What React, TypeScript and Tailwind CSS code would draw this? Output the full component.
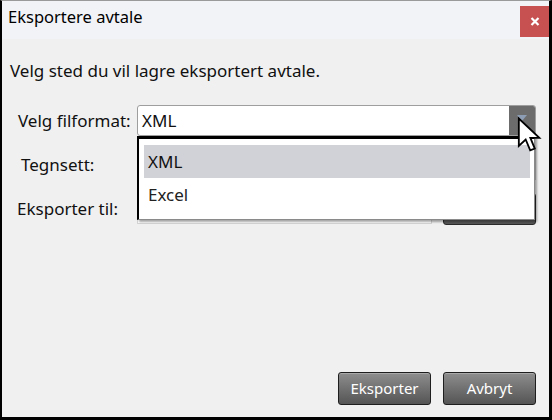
import React from "react";

const font = { fontFamily: '"Noto Sans", "Open Sans", sans-serif' };

function Cursor() {
  return (
    <svg
      className="absolute left-[515px] top-[116px] pointer-events-none z-20"
      width="31"
      height="41"
      viewBox="0 0 20 27"
    >
      <path
        d="M1 1 L1 19 L5.5 14.8 L8.5 22 L11.5 20.8 L8.6 13.8 L14.5 13.8 Z"
        fill="#ffffff"
        stroke="#000000"
        strokeWidth="1.2"
        strokeLinejoin="miter"
      />
    </svg>
  );
}

export default function App() {
  return (
    <div
      className="relative w-[552px] h-[420px] bg-[#f0f0f0] border-l-[2px] border-r-[3px] border-b-[3px] border-t border-black border-t-[#9a9a9a] flex flex-col overflow-hidden text-[#111]"
      style={font}
    >
      {/* Title bar */}
      <div className="h-[38px] flex items-start bg-[#f2f3f7]">
        <div className="pl-[6px] pt-[5px] text-[16.5px] leading-[22px] text-black">Eksportere avtale</div>
        <div className="ml-auto mt-[5px] w-[29px] h-[31px] bg-[#c75050] flex items-center justify-center">
          <svg width="10" height="9" viewBox="0 0 10 9">
            <path d="M1.5 1 L8.5 8 M8.5 1 L1.5 8" stroke="#ffffff" strokeWidth="2.2" />
          </svg>
        </div>
      </div>

      {/* Body */}
      <div className="flex-1 flex flex-col">
        <div className="pl-[8px] pt-[21px] text-[17px] leading-[22px]">
          Velg sted du vil lagre eksportert avtale.
        </div>

        {/* Row 1 */}
        <div className="mt-[23px] flex items-center h-[31px]">
          <div className="w-[135px] pl-[16px] text-[17px]">Velg filformat:</div>
          <div className="relative w-[399px] h-[31px] bg-white border border-[#9e9e9e] rounded-[3px] flex">
            <div className="flex-1 pl-[4px] text-[17px] leading-[29px]">XML</div>
            <div className="w-[26px] h-full bg-[#6c6c6c] rounded-r-[2px] flex justify-center pt-[9px]">
              <svg width="10" height="6" viewBox="0 0 10 6">
                <path d="M0 0 L10 0 L5 6 Z" fill="#8d9db3" />
              </svg>
            </div>

            {/* Popup */}
            <div className="absolute left-[-1px] top-[30px] z-10 w-[398px] h-[84px] bg-white border-t-[3px] border-l-[2px] border-black border-r border-b border-r-[#8a8a8a] border-b-[#8a8a8a] shadow-[2px_2px_2px_rgba(0,0,0,0.35)] pt-[6px] pl-[5px] pr-[4px]">
              <div className="h-[33px] bg-[#d1d2d7] pl-[4px] text-[17px] leading-[33px]">XML</div>
              <div className="h-[33px] pl-[4px] text-[17px] leading-[33px] text-[#222]">Excel</div>
            </div>
          </div>
        </div>

        {/* Row 2 */}
        <div className="mt-[13px] flex items-center h-[31px]">
          <div className="w-[135px] pl-[19px] text-[17px]">Tegnsett:</div>
          <div className="w-[399px] h-[31px] bg-white border border-[#c8c8c8]" />
        </div>

        {/* Row 3 */}
        <div className="mt-[13px] flex items-center h-[31px]">
          <div className="w-[135px] pl-[15px] text-[17px]">Eksporter til:</div>
          <div className="w-[295px] h-[31px] bg-white border border-[#d4d4d4]" />
          <div className="ml-[11px] w-[93px] h-[32px] rounded-[3px] border border-[#2a2a2a] bg-gradient-to-b from-[#8c8c8c] to-[#545454]" />
        </div>

        <div className="flex-1" />

        {/* Buttons */}
        <div className="flex justify-end gap-[12px] pr-[13px] pb-[12px]">
          <button className="w-[93px] h-[33px] rounded-[3px] border border-[#1e1e1e] bg-gradient-to-b from-[#8e8e8e] to-[#555555] text-white text-[15px] shadow-[inset_0_1px_0_rgba(255,255,255,0.25)]">
            Eksporter
          </button>
          <button className="w-[93px] h-[33px] rounded-[3px] border border-[#1e1e1e] bg-gradient-to-b from-[#8e8e8e] to-[#555555] text-white text-[15px] shadow-[inset_0_1px_0_rgba(255,255,255,0.25)]">
            Avbryt
          </button>
        </div>
      </div>

      <Cursor />
    </div>
  );
}
